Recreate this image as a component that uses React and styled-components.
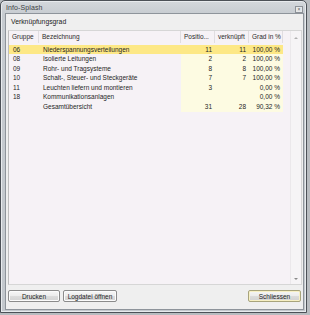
import styled, { createGlobalStyle } from "styled-components";

const GlobalStyle = createGlobalStyle`
  html, body {
    margin: 0;
    padding: 0;
    background: #b8bcc0;
  }
  body {
    font-family: "Liberation Sans", Arial, sans-serif;
    color: #1e1e1e;
  }
`;

const Window = styled.div`
  box-sizing: border-box;
  width: 307px;
  height: 313px;
  border: 1px solid #4c5157;
  border-radius: 5px 5px 0 0;
  background: linear-gradient(180deg, #d4d8dc 0px, #c6cbd0 14px, #c3c8cd 100%);
  display: flex;
  flex-direction: column;
  box-shadow: inset 0 0 0 1px #e8ebee;
`;

const TitleBar = styled.div`
  height: 12px;
  display: flex;
  align-items: center;
  justify-content: space-between;
  padding: 0 3px 0 5px;
`;

const Title = styled.span`
  font-size: 7px;
  color: #3c3f44;
  letter-spacing: 0.1px;
`;

const CloseBox = styled.div`
  box-sizing: border-box;
  width: 8px;
  height: 7px;
  margin-top: 4px;
  border: 1px solid #8d9298;
  background: #e6e8ea;
  display: flex;
  align-items: center;
  justify-content: center;
  font-size: 5px;
  line-height: 1;
  color: #555;
`;

const Client = styled.div`
  flex: 1;
  margin: 0 2px 2px 4px;
  border: 1px solid #8e949b;
  background: #efefef;
  display: flex;
  flex-direction: column;
  padding: 0 1px 0 2px;
`;

const GroupLabel = styled.div`
  font-size: 6.8px;
  height: 16px;
  line-height: 16px;
  padding-left: 3px;
  color: #222;
`;

const ListPanel = styled.div`
  flex: 1;
  border: 1px solid #d6d6d6;
  border-left-color: #bdbdbd;
  background: #f6f2f6;
  display: flex;
`;

const Table = styled.div`
  flex: 1;
  display: flex;
  flex-direction: column;
`;

const cols = "30px 142px 34px 34px 34px";

const HeaderRow = styled.div`
  display: grid;
  grid-template-columns: ${cols};
  height: 12px;
  margin-bottom: 1.5px;
`;

const HeaderCell = styled.div`
  font-size: 6.5px;
  line-height: 12px;
  padding-left: ${(p) => p.$pad || 3}px;
  border-right: 1px solid #e0dde0;
  color: #2a2a2a;
  white-space: nowrap;
  overflow: hidden;
`;

const Row = styled.div`
  display: grid;
  grid-template-columns: ${cols};
  height: 9.6px;
  background: ${(p) => (p.$selected ? "#fde886" : "transparent")};
`;

const Cell = styled.div`
  font-size: 6.5px;
  line-height: 9.6px;
  white-space: nowrap;
  overflow: hidden;
  padding: ${(p) => (p.$num ? "0 3px 0 0" : "0 0 0 4px")};
  text-align: ${(p) => (p.$num ? "right" : "left")};
  background: ${(p) => (p.$num && !p.$selected ? "#fdfbe2" : "transparent")};
  color: #1e1e1e;
`;

const Scrollbar = styled.div`
  width: 11px;
  margin-left: 7px;
  background: #f6f4f6;
  border-left: 1px solid #ebe8eb;
  display: flex;
  flex-direction: column;
  justify-content: space-between;
  align-items: center;
  padding: 6px 0 4px;
`;

const Arrow = styled.div`
  width: 0;
  height: 0;
  border-left: 2px solid transparent;
  border-right: 2px solid transparent;
  ${(p) =>
    p.$down
      ? "border-top: 2px solid #8a8a8a;"
      : "border-bottom: 2px solid #b0b0b0;"}
`;

const ButtonBar = styled.div`
  display: flex;
  align-items: center;
  gap: 3px;
  height: 22px;
  padding: 0 1px 2px 0;
`;

const Button = styled.button`
  box-sizing: border-box;
  height: 12px;
  width: ${(p) => p.$w}px;
  padding: 0;
  margin-left: ${(p) => (p.$push ? "auto" : "0")};
  font-family: "Liberation Sans", Arial, sans-serif;
  font-size: 6.5px;
  color: #1e1e1e;
  border: 1px solid ${(p) => (p.$default ? "#a8a47c" : "#8b8b8b")};
  border-radius: 2px;
  background: linear-gradient(180deg, #f6f6f6 0%, #ececec 50%, #dcdcdc 51%, #d3d3d3 100%);
  box-shadow: inset 0 0 0 1px ${(p) => (p.$default ? "#f7f0c4" : "#fbfbfb")};
`;

const rows = [
  { g: "06", b: "Niederspannungsverteilungen", p: "11", v: "11", d: "100,00 %", sel: true },
  { g: "08", b: "Isolierte Leitungen", p: "2", v: "2", d: "100,00 %" },
  { g: "09", b: "Rohr- und Tragsysteme", p: "8", v: "8", d: "100,00 %" },
  { g: "10", b: "Schalt-, Steuer- und Steckgeräte", p: "7", v: "7", d: "100,00 %" },
  { g: "11", b: "Leuchten liefern und montieren", p: "3", v: "", d: "0,00 %" },
  { g: "18", b: "Kommunikationsanlagen", p: "", v: "", d: "0,00 %" },
  { g: "", b: "Gesamtübersicht", p: "31", v: "28", d: "90,32 %" },
];

export default function App() {
  return (
    <>
      <GlobalStyle />
      <Window>
        <TitleBar>
          <Title>Info-Splash</Title>
          <CloseBox>×</CloseBox>
        </TitleBar>
        <Client>
          <GroupLabel>Verknüpfungsgrad</GroupLabel>
          <ListPanel>
            <Table>
              <HeaderRow>
                <HeaderCell>Gruppe</HeaderCell>
                <HeaderCell>Bezeichnung</HeaderCell>
                <HeaderCell>Positio...</HeaderCell>
                <HeaderCell>verknüpft</HeaderCell>
                <HeaderCell>Grad in %</HeaderCell>
              </HeaderRow>
              {rows.map((r, i) => (
                <Row key={i} $selected={r.sel}>
                  <Cell>{r.g}</Cell>
                  <Cell>{r.b}</Cell>
                  <Cell $num $selected={r.sel}>{r.p}</Cell>
                  <Cell $num $selected={r.sel}>{r.v}</Cell>
                  <Cell $num $selected={r.sel}>{r.d}</Cell>
                </Row>
              ))}
            </Table>
            <Scrollbar>
              <Arrow />
              <Arrow $down />
            </Scrollbar>
          </ListPanel>
          <ButtonBar>
            <Button $w={52}>Drucken</Button>
            <Button $w={54}>Logdatei öffnen</Button>
            <Button $w={53} $push $default>Schliessen</Button>
          </ButtonBar>
        </Client>
      </Window>
    </>
  );
}
